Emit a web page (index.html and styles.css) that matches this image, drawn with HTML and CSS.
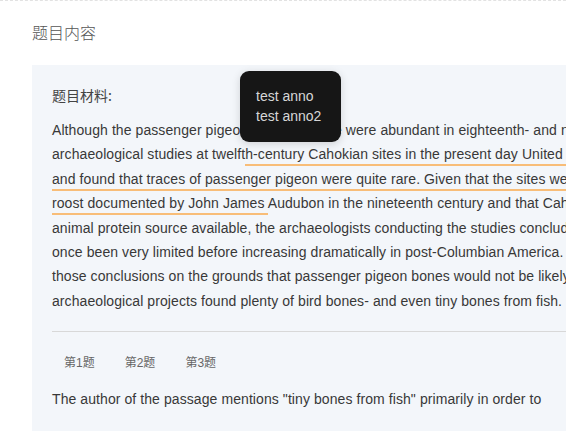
FILE: index.html
```html
<!DOCTYPE html>
<html lang="zh-CN">
<head>
    <meta charset="UTF-8">
    <meta name="viewport" content="width=device-width, initial-scale=1.0">
    <title>题目内容</title>
    <link rel="stylesheet" href="styles.css">
</head>
<body>

<div class="page">
    <!-- Section Title -->
    <div class="section-title">题目内容</div>

    <div class="panel">
        <div class="label">题目材料:</div>

        <p class="passage">Although the passenger pigeon numbers once were abundant in eighteenth- and nineteenth-century North America,<br>archaeological studies at twelft<span class="anno">h-century Cahokian sites in the present day United States have examined animal remains<br>and found that traces of passenger pigeon were quite rare. Given that the sites were near the largest pigeon<br>roost documented by John James </span>Audubon in the nineteenth century and that Cahokians would have found pigeons an easy<br>animal protein source available, the archaeologists conducting the studies concluded that pigeon populations must have<br>once been very limited before increasing dramatically in post-Columbian America. Other scholars, however, have questioned<br>those conclusions on the grounds that passenger pigeon bones would not be likely to survive, even though the<br>archaeological projects found plenty of bird bones- and even tiny bones from fish.</p>

        <!-- Annotation Tooltip -->
        <div class="tooltip">
            <div>test anno</div>
            <div>test anno2</div>
        </div>

        <div class="divider"></div>

        <div class="tabs">
            <span class="tab">第1题</span>
            <span class="tab">第2题</span>
            <span class="tab">第3题</span>
        </div>

        <p class="question">The author of the passage mentions "tiny bones from fish" primarily in order to</p>
    </div>
</div>

</body>
</html>
```

FILE: styles.css
```css
body {
    margin: 0;
    padding: 0;
    background-color: #fff;
    font-family: "Liberation Sans", "Noto Sans CJK SC", sans-serif;
    overflow: hidden;
}

.page {
    border-top: 1px dashed #e2e2e2;
    padding: 19px 0 0 32px;
}

/* Section Title */
.section-title {
    font-family: "Noto Sans CJK SC", sans-serif;
    font-size: 16px;
    line-height: 24px;
    font-weight: 300;
    color: #555;
    margin-bottom: 21px;
}

/* Grey Material Panel */
.panel {
    position: relative;
    width: 900px;
    background-color: #f3f6fa;
    padding: 20px 20px 40px 20px;
}

.label {
    font-family: "Noto Sans CJK SC", sans-serif;
    font-size: 14px;
    line-height: 20px;
    color: #444;
}

.passage {
    margin: 13px 0 0 0;
    font-size: 14px;
    line-height: 24.4px;
    letter-spacing: 0.08px;
    color: #383838;
    white-space: nowrap;
}

.anno {
    border-bottom: 2px solid #f8bd78;
    padding-bottom: 2px;
}

.tooltip {
    position: absolute;
    left: 208px;
    top: 6px;
    width: 101px;
    box-sizing: border-box;
    padding: 16px;
    background-color: #161616;
    border-radius: 9px;
    box-shadow: 0 2px 8px rgba(0, 0, 0, 0.15);
    font-size: 14px;
    line-height: 19.5px;
    color: #d6d6d6;
    white-space: nowrap;
}

.divider {
    height: 1px;
    background-color: #d8d8d8;
    margin-top: 18px;
}

.tabs {
    display: flex;
    gap: 6px;
    margin-top: 15px;
}

.tab {
    font-family: "Liberation Sans", "Noto Sans CJK SC", sans-serif;
    font-size: 12px;
    line-height: 16px;
    padding: 8px 12px;
    color: #666;
}

.question {
    margin: 8px 0 0 0;
    font-size: 14px;
    line-height: 24.4px;
    letter-spacing: 0.08px;
    color: #383838;
}
```
